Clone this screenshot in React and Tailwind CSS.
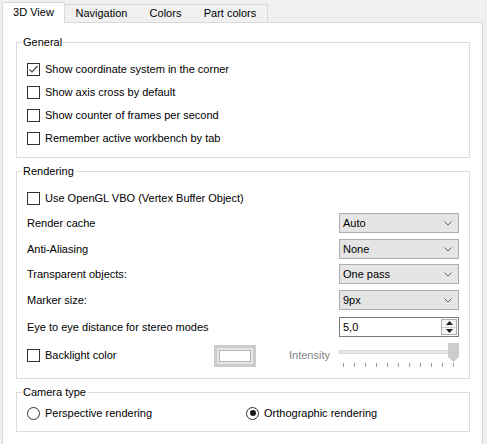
import React from "react";

const font = { fontFamily: '"Liberation Sans", Arial, sans-serif' };

const Checkbox = ({ checked }) => (
  <span className="w-[13px] h-[13px] border border-[#333333] bg-white flex items-center justify-center shrink-0">
    {checked && (
      <svg width="11" height="11" viewBox="0 0 11 11">
        <polyline points="1.5,5.5 4,8 9.5,2" fill="none" stroke="#4a4a4a" strokeWidth="1.2" />
      </svg>
    )}
  </span>
);

const Radio = ({ checked }) => (
  <span className="w-[13px] h-[13px] rounded-full border border-[#333333] bg-white flex items-center justify-center shrink-0">
    {checked && <span className="w-[6px] h-[6px] rounded-full bg-[#1a1a1a]" />}
  </span>
);

const CheckRow = ({ checked, label }) => (
  <div className="h-[23px] flex items-center gap-[5px] pl-[10px]">
    <Checkbox checked={checked} />
    <span>{label}</span>
  </div>
);

const Combo = ({ value }) => (
  <div className="w-[120px] h-[20px] border border-[#adadad] bg-[#e5e5e5] flex items-center justify-between pl-[3px] pr-[6px]">
    <span>{value}</span>
    <svg width="8" height="5" viewBox="0 0 8 5">
      <polyline points="0.5,0.5 4,4 7.5,0.5" fill="none" stroke="#606060" strokeWidth="1" />
    </svg>
  </div>
);

const ComboRow = ({ label, value, mt }) => (
  <div className={`flex items-center justify-between pl-[10px] pr-[10px] ${mt}`}>
    <span>{label}</span>
    <Combo value={value} />
  </div>
);

const Group = ({ title, className, children }) => (
  <fieldset className={`border border-[#dcdcdc] ml-[13px] w-[454px] ${className}`}>
    <legend className="ml-[5px] px-px leading-[16px]">{title}</legend>
    {children}
  </fieldset>
);

const tabs = [
  { name: "3D View", w: "w-[63px]", active: true },
  { name: "Navigation", w: "w-[73px]" },
  { name: "Colors", w: "w-[55px]" },
  { name: "Part colors", w: "w-[75px]", last: true },
];

export default function App() {
  const ticks = Array.from({ length: 11 });

  return (
    <div
      className="w-[487px] h-[444px] bg-[#f0f0f0] overflow-hidden text-[11px] text-black"
      style={font}
    >
      <div className="h-[22px] flex items-end pl-[2px]">
        {tabs.map((t) =>
          t.active ? (
            <div
              key={t.name}
              className={`${t.w} h-[21px] -mb-px relative z-10 bg-white border-t border-l border-r border-[#d9d9d9] flex items-center justify-center pb-[2px]`}
            >
              {t.name}
            </div>
          ) : (
            <div
              key={t.name}
              className={`${t.w} h-[18px] bg-[#f0f0f0] border-t border-[#d9d9d9] ${
                t.last ? "border-r" : ""
              } flex items-center justify-center`}
            >
              {t.name}
            </div>
          )
        )}
      </div>

      <div className="ml-[2px] w-[481px] h-[440px] bg-white border border-[#d9d9d9] pt-[11px]">
        <Group title="General" className="pt-[8px] pb-[7px]">
          <CheckRow checked label="Show coordinate system in the corner" />
          <CheckRow label="Show axis cross by default" />
          <CheckRow label="Show counter of frames per second" />
          <CheckRow label="Remember active workbench by tab" />
        </Group>

        <Group title="Rendering" className="mt-[5px] pt-[8px] pb-[10px]">
          <div className="h-[22px] flex items-center gap-[5px] pl-[10px]">
            <Checkbox />
            <span>Use OpenGL VBO (Vertex Buffer Object)</span>
          </div>
          <ComboRow label="Render cache" value="Auto" mt="mt-[4px]" />
          <ComboRow label="Anti-Aliasing" value="None" mt="mt-[6px]" />
          <ComboRow label="Transparent objects:" value="One pass" mt="mt-[5px]" />
          <ComboRow label="Marker size:" value="9px" mt="mt-[6px]" />

          <div className="flex items-center justify-between pl-[10px] pr-[10px] mt-[7px]">
            <span>Eye to eye distance for stereo modes</span>
            <div className="w-[120px] h-[20px] border border-[#7a7a7a] bg-white flex items-center justify-between pl-[3px] pr-px">
              <span>5,0</span>
              <div className="w-[16px] h-[16px] border border-[#adadad] bg-[#f5f5f5] flex flex-col">
                <div className="flex-1 flex items-center justify-center border-b border-[#cfcfcf]">
                  <svg width="7" height="4" viewBox="0 0 7 4">
                    <polygon points="0,4 3.5,0 7,4" fill="#1a1a1a" />
                  </svg>
                </div>
                <div className="flex-1 flex items-center justify-center">
                  <svg width="7" height="4" viewBox="0 0 7 4">
                    <polygon points="0,0 3.5,4 7,0" fill="#1a1a1a" />
                  </svg>
                </div>
              </div>
            </div>
          </div>

          <div className="flex items-center pl-[10px] pr-[10px] mt-[6px] h-[25px]">
            <div className="flex items-center gap-[5px] w-[187px]">
              <Checkbox />
              <span>Backlight color</span>
            </div>
            <div className="w-[42px] h-[22px] bg-[#cccccc] p-[3px] flex">
              <div className="flex-1 bg-[#e6e6e6] p-[2px] flex">
                <div className="flex-1 bg-white border border-[#b4b4b4]" />
              </div>
            </div>
            <span className="ml-[33px] text-[#838383]">Intensity</span>
            <div className="ml-auto w-[120px] h-[25px] relative">
              <div className="absolute left-0 right-[1px] top-[7px] h-[4px] bg-[#e7e7e7] border border-[#d6d6d6]" />
              <svg className="absolute right-0 top-0" width="11" height="19" viewBox="0 0 11 19">
                <polygon points="0,0 11,0 11,14 5.5,19 0,14" fill="#cdcdcd" />
              </svg>
              <div className="absolute left-[4px] right-[5px] top-[20px] flex justify-between">
                {ticks.map((_, i) => (
                  <span key={i} className="w-px h-[4px] bg-[#a0a0a0]" />
                ))}
              </div>
            </div>
          </div>
        </Group>

        <Group title="Camera type" className="mt-[5px] pt-[3px] pb-[8px]">
          <div className="h-[20px] flex items-center pl-[10px]">
            <div className="flex items-center gap-[5px] w-[219px]">
              <Radio />
              <span>Perspective rendering</span>
            </div>
            <div className="flex items-center gap-[5px]">
              <Radio checked />
              <span>Orthographic rendering</span>
            </div>
          </div>
        </Group>
      </div>
    </div>
  );
}
